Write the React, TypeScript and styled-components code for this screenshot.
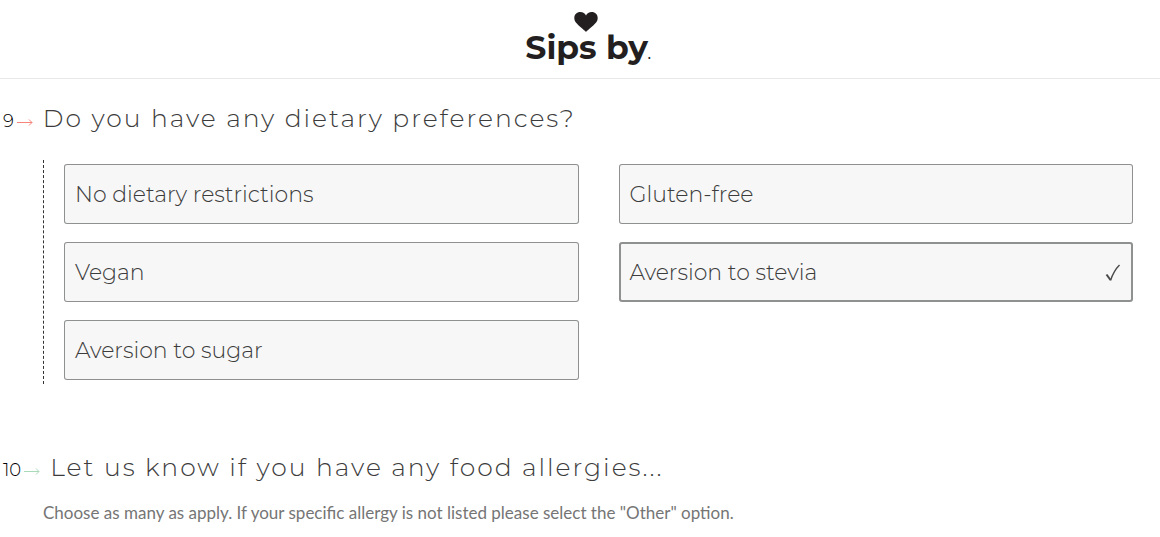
import React, { useState } from "react";
import styled, { createGlobalStyle } from "styled-components";

const GlobalStyle = createGlobalStyle`
  *, *::before, *::after { box-sizing: border-box; }
  body {
    margin: 0;
    background: #fff;
    color: #3c3c3c;
    font-family: Montserrat, Inter, sans-serif;
    font-weight: 300;
  }
`;

const Header = styled.header`
  display: flex;
  justify-content: center;
  padding: 12px 0 16px 16px;
  border-bottom: 1px solid #e8e8e8;
`;

const Logo = styled.a`
  display: flex;
  flex-direction: column;
  align-items: center;
  color: #231f20;
  text-decoration: none;

  svg {
    margin-right: 4px;
  }
`;

const Wordmark = styled.span`
  font-size: 33px;
  font-weight: 700;
  line-height: 30px;
  white-space: nowrap;

  small {
    font-size: 10px;
    line-height: 10px;
  }
`;

const Question = styled.section`
  padding: 23px 27px 0 3px;
`;

const Fieldset = styled.fieldset`
  margin: 0;
  padding: 0;
  border: 0;
  min-width: 0;
`;

const Title = styled.legend`
  display: flex;
  align-items: center;
  padding: 0;
  font-size: 25px;
  line-height: 32px;
  letter-spacing: 2px;
`;

const Marker = styled.span<{ $tint: string }>`
  display: flex;
  align-items: center;
  gap: 3px;
  margin-right: 10px;
  padding-top: 5px;
  color: #000;
  font-size: 18px;
  line-height: 20px;
  letter-spacing: 0;

  svg {
    margin-top: 2px;
    color: ${(p) => p.$tint};
  }
`;

const Options = styled.div`
  display: grid;
  grid-template-columns: 1fr 1fr;
  gap: 18px 40px;
  margin: 26px 0 44px 40px;
  padding: 4px 0 4px 20px;
  border-left: 1px dashed #333;
`;

const Option = styled.label<{ $checked: boolean }>`
  display: flex;
  align-items: center;
  justify-content: space-between;
  height: 60px;
  padding: 1px 12px 0 11px;
  border-radius: 3px;
  background: #f7f7f7;
  box-shadow: inset 0 0 0 ${(p) => (p.$checked ? 2 : 1)}px #8f9090;
  font-size: 22px;
  line-height: 31px;
  cursor: pointer;

  &:focus-within {
    outline: 2px solid #8f9090;
  }
`;

const HiddenCheckbox = styled.input`
  position: absolute;
  opacity: 0;
  pointer-events: none;
`;

const Hint = styled.p`
  margin: 18px 0 0 40px;
  color: #757575;
  font: 400 17px/24px Lato, sans-serif;
`;

const Arrow = () => (
  <svg width="16" height="8" viewBox="0 0 16 8" fill="none" stroke="currentColor" aria-hidden="true">
    <path d="M0 4.5H15M12 1.5L15 4.5L12 7.5" />
  </svg>
);

const Check = () => (
  <svg width="16" height="18" viewBox="0 0 16 18" fill="none" stroke="#484848" aria-hidden="true">
    <path d="M1.5 10.5L5.5 16" strokeWidth="2" />
    <path d="M5.5 16.5C7.5 10.5 10 5.5 14.5 1" strokeWidth="1.4" />
  </svg>
);

const choices = [
  "No dietary restrictions",
  "Gluten-free",
  "Vegan",
  "Aversion to stevia",
  "Aversion to sugar",
];

export default function App() {
  const [selected, setSelected] = useState<string[]>(["Aversion to stevia"]);
  const toggle = (name: string) =>
    setSelected((s) => (s.includes(name) ? s.filter((n) => n !== name) : [...s, name]));

  return (
    <>
      <GlobalStyle />
      <Header>
        <Logo href="#">
          <svg width="24" height="20" viewBox="0 0 24 20" fill="currentColor" aria-hidden="true">
            <path d="M12 20C10.500 17.800 2.500 12.500.8 8.700-.9 4 2 0 6.300 0c2.700 0 4.700 1.400 5.700 3.600C13 1.400 15 0 17.700 0c4.300 0 7.200 4 5.500 8.700C21.500 12.500 13.500 17.800 12 20Z" />
          </svg>
          <Wordmark>
            Sips by<small>.</small>
          </Wordmark>
        </Logo>
      </Header>
      <main>
        <Question>
          <Fieldset>
            <Title>
              <Marker $tint="#f88379">
                9<Arrow />
              </Marker>
              Do you have any dietary preferences?
            </Title>
            <Options>
              {choices.map((name) => {
                const checked = selected.includes(name);
                return (
                  <Option key={name} $checked={checked}>
                    <HiddenCheckbox type="checkbox" checked={checked} onChange={() => toggle(name)} />
                    {name}
                    {checked && <Check />}
                  </Option>
                );
              })}
            </Options>
          </Fieldset>
        </Question>
        <Question>
          <Fieldset>
            <Title>
              <Marker $tint="#a8dab9">
                10<Arrow />
              </Marker>
              Let us know if you have any food allergies...
            </Title>
            <Hint>
              Choose as many as apply. If your specific allergy is not listed please select the "Other" option.
            </Hint>
          </Fieldset>
        </Question>
      </main>
    </>
  );
}
